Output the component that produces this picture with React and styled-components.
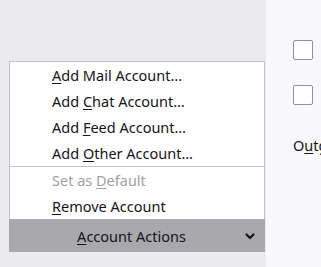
import React from 'react'
import styled, { createGlobalStyle } from "styled-components";

const Global = createGlobalStyle`
body {
  margin: 0;
  font-family: "Noto Sans", "Open Sans", sans-serif;
  font-size: 14.5px;
  color: #15141a;
}
`;

const Page = styled.div`
display: flex;
width: 321px;
height: 267px;
overflow: hidden;
`;

const Sidebar = styled.div`
width: 266px;
flex-shrink: 0;
background: #ebebef;
display: flex;
flex-direction: column;
justify-content: flex-end;
padding: 0 1px 15px 9px;
box-sizing: border-box;
`;

const Menu = styled.div`
background: #fff;
border: 1px solid #c4c4c8;
border-bottom: none;
display: flex;
flex-direction: column;
`;

const Item = styled.div`
height: 26px;
line-height: 26px;
padding-left: 42px;
white-space: nowrap;
color: ${p => (p.disabled ? "#a0a0a4" : "#15141a")};
`;

const Key = styled.span`
text-decoration: underline;
text-underline-offset: 2px;
`;

const Separator = styled.div`
height: 1px;
background: #c4c4c8;
`;

const ActionButton = styled.div`
height: 33px;
background: #a8a8ad;
display: flex;
align-items: center;
padding-left: 10px;
box-sizing: border-box;
`;

const ButtonLabel = styled.span`
flex: 1;
text-align: center;
`;

const Chevron = styled.svg`
width: 12px;
height: 12px;
margin-right: 9px;
`;

const Main = styled.div`
flex: 1;
background: #f9f9fb;
padding: 40px 0 0 27px;
display: flex;
flex-direction: column;
overflow: hidden;
`;

const Check = styled.div`
width: 18px;
height: 18px;
border: 1px solid #8f8f9d;
border-radius: 2px;
background: #fff;
margin-bottom: 25px;
`;

const Label = styled.div`
margin-top: 5px;
white-space: nowrap;
`;

export default function App() {
  return (
    <Page>
      <Global />
      <Sidebar>
        <Menu>
          <Item><Key>A</Key>dd Mail Account…</Item>
          <Item>Add <Key>C</Key>hat Account…</Item>
          <Item>Add <Key>F</Key>eed Account…</Item>
          <Item>Add <Key>O</Key>ther Account…</Item>
          <Separator />
          <Item disabled>Set as <Key>D</Key>efault</Item>
          <Item><Key>R</Key>emove Account</Item>
        </Menu>
        <ActionButton>
          <ButtonLabel><Key>A</Key>ccount Actions</ButtonLabel>
          <Chevron viewBox="0 0 12 12">
            <path d="M2.5 4.5 L6 8 L9.5 4.5" fill="none" stroke="#15141a" strokeWidth="2.2" strokeLinecap="round" strokeLinejoin="round" />
          </Chevron>
        </ActionButton>
      </Sidebar>
      <Main>
        <Check />
        <Check />
        <Label>O<Key>u</Key>tgoing</Label>
      </Main>
    </Page>
  )
}
